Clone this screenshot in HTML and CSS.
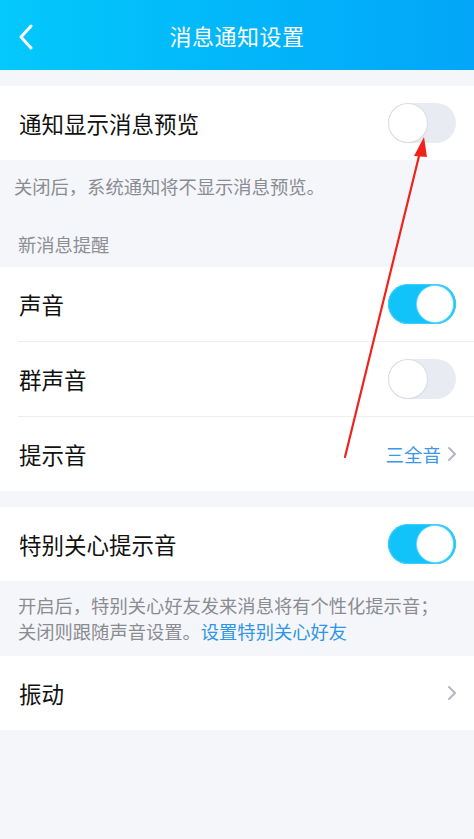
FILE: index.html
```html
<!DOCTYPE html>
<html lang="zh-CN">
<head>
<meta charset="utf-8">
<title>消息通知设置</title>
<link rel="stylesheet" href="styles.css">
</head>
<body>
<div class="page">
  <header class="nav">
    <span class="back">
      <svg width="16" height="26" viewBox="0 0 16 26"><path d="M13 2 L3 13 L13 24" fill="none" stroke="#fff" stroke-width="3" stroke-linecap="round" stroke-linejoin="round"/></svg>
    </span>
    <h1 class="title">消息通知设置</h1>
  </header>

  <div class="gap"></div>
  <section class="group">
    <div class="row"><span class="label">通知显示消息预览</span><span class="switch"></span></div>
  </section>
  <p class="hint hint-first">关闭后，系统通知将不显示消息预览。</p>
  <p class="section-label">新消息提醒</p>

  <section class="group">
    <div class="row"><span class="label">声音</span><span class="switch on"></span></div>
    <div class="row"><span class="label">群声音</span><span class="switch"></span></div>
    <div class="row"><span class="label">提示音</span><span class="value">三全音<svg class="chev" width="10" height="16" viewBox="0 0 10 16"><path d="M2 2 L8 8 L2 14" fill="none" stroke="#b4b7bf" stroke-width="2" stroke-linecap="round" stroke-linejoin="round"/></svg></span></div>
  </section>

  <div class="gap"></div>
  <section class="group">
    <div class="row"><span class="label">特别关心提示音</span><span class="switch on"></span></div>
  </section>
  <p class="hint hint-two">开启后，特别关心好友发来消息将有个性化提示音；<br>关闭则跟随声音设置。<span class="link">设置特别关心好友</span></p>

  <section class="group">
    <div class="row"><span class="label">振动</span><span class="value"><svg class="chev" width="10" height="16" viewBox="0 0 10 16"><path d="M2 2 L8 8 L2 14" fill="none" stroke="#b4b7bf" stroke-width="2" stroke-linecap="round" stroke-linejoin="round"/></svg></span></div>
  </section>

  <svg class="annot" width="474" height="839" viewBox="0 0 474 839">
    <line x1="345" y1="457" x2="420" y2="152" stroke="#f0231c" stroke-width="2.2" stroke-linecap="round"/>
    <polygon points="424,137 414,156 427,157" fill="#f0231c"/>
  </svg>
</div>
</body>
</html>
```
FILE: styles.css
```css
* { box-sizing: border-box; }
html, body { margin: 0; padding: 0; }
body {
  background: #f5f6fa;
  font-family: "Noto Sans CJK SC", "Noto Sans", sans-serif;
  color: #111;
}
.page {
  position: relative;
  width: 474px;
  min-height: 839px;
  background: #f5f6fa;
}
.nav {
  height: 70px;
  background: linear-gradient(90deg, #04c9fb 0%, #02b8fa 45%, #03a6f8 100%);
  display: flex;
  align-items: center;
  justify-content: center;
  position: relative;
}
.back {
  position: absolute;
  left: 18px;
  top: 24px;
  display: flex;
}
.title {
  margin: 0;
  font-size: 22px;
  font-weight: 400;
  color: #fff;
  letter-spacing: 0.5px;
}
.gap { height: 16px; }
.group { background: #fff; }
.row {
  height: 75px;
  display: flex;
  align-items: center;
  justify-content: space-between;
  padding: 0 18px 0 19px;
  position: relative;
}
.row + .row::before {
  content: "";
  position: absolute;
  left: 18px;
  right: 0;
  top: 0;
  height: 1px;
  background: #eceef2;
}
.group .row:first-child { height: 74px; }
.label {
  font-size: 22.5px;
  line-height: 30px;
  color: #111;
}
.switch {
  width: 68px;
  height: 40px;
  border-radius: 20px;
  background: #e9ebf3;
  position: relative;
  flex: none;
}
.switch::after {
  content: "";
  position: absolute;
  left: 1px;
  top: 1px;
  width: 38px;
  height: 38px;
  border-radius: 50%;
  background: #fff;
  box-shadow: 0 0 0 1px #dcdee7, 0 1px 2px rgba(0,0,0,0.08);
}
.switch.on {
  background: #12c3f9;
  box-shadow: inset 0 0 0 1px #3fcff9;
}
.switch.on::after {
  left: 29px;
  top: 2px;
  width: 36px;
  height: 36px;
  box-shadow: 0 0 0 1px #6fdbfa;
}
.value {
  display: flex;
  align-items: center;
  gap: 6px;
  font-size: 18.5px;
  color: #3d96e6;
  margin-right: -1px;
}
.chev { display: block; }
.hint {
  margin: 0;
  font-size: 18.3px;
  color: #8a8c92;
}
.hint-first {
  padding: 13px 14px 23px;
  line-height: 26px;
}
.section-label {
  margin: 0;
  padding: 9px 18px 10px;
  font-size: 18.3px;
  line-height: 26px;
  color: #8d8f95;
}
.hint-two {
  padding: 11px 10px 12px 18px;
  line-height: 26px;
}
.link { color: #2f95e4; }
.annot {
  position: absolute;
  left: 0;
  top: 0;
  pointer-events: none;
}
```
